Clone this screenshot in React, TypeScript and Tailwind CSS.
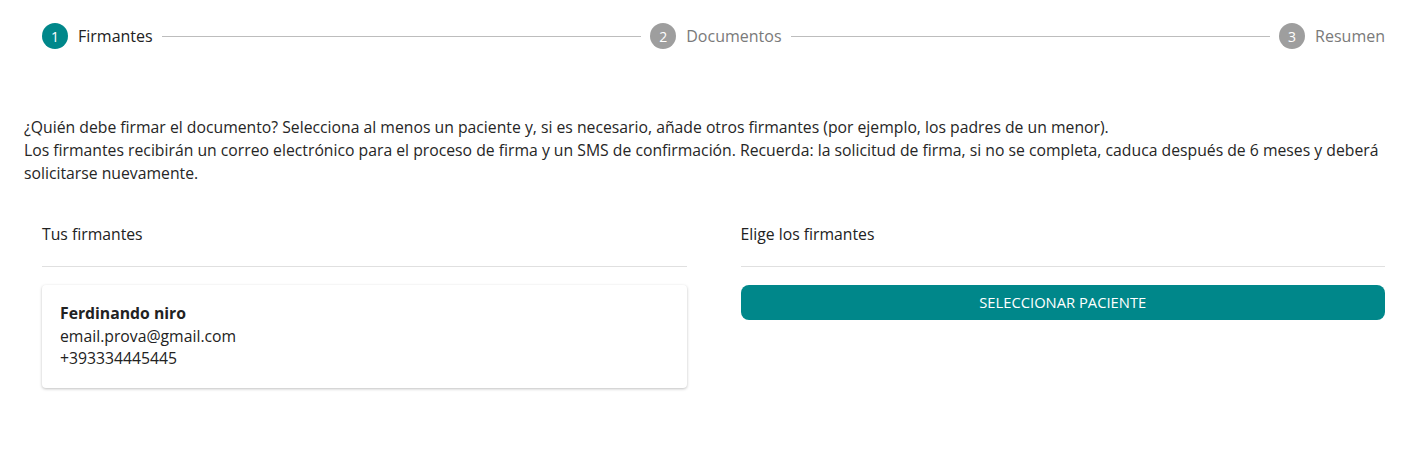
import React from "react";

const steps = [
  { n: 1, label: "Firmantes", active: true },
  { n: 2, label: "Documentos", active: false },
  { n: 3, label: "Resumen", active: false },
];

function Stepper() {
  return (
    <div className="flex items-center pl-[18px] pr-[16px] pt-[23px]">
      {steps.map((s, i) => (
        <React.Fragment key={s.n}>
          <div className="flex items-center">
            <div
              className={
                "flex h-[26px] w-[26px] items-center justify-center rounded-full text-[14px] text-white " +
                (s.active ? "bg-[#00878a]" : "bg-[#9e9e9e]")
              }
            >
              {s.n}
            </div>
            <span
              className={
                "pl-[10px] text-[16px] " +
                (s.active ? "text-[#222]" : "text-[#7a7a7a]")
              }
            >
              {s.label}
            </span>
          </div>
          {i < steps.length - 1 && (
            <div className="mx-[9px] h-px flex-1 bg-[#bdbdbd]" />
          )}
        </React.Fragment>
      ))}
    </div>
  );
}

export default function App() {
  return (
    <div className="min-h-screen bg-white px-6 font-['Open_Sans',sans-serif] text-[#222]">
      <Stepper />
      <div className="pt-[67px] text-[15.75px] leading-[23px] text-[#262626]">
        <p>
          ¿Quién debe firmar el documento? Selecciona al menos un paciente y, si
          es necesario, añade otros firmantes (por ejemplo, los padres de un
          menor).
        </p>
        <p>
          Los firmantes recibirán un correo electrónico para el proceso de firma
          y un SMS de confirmación. Recuerda: la solicitud de firma, si no se
          completa, caduca después de 6 meses y deberá solicitarse nuevamente.
        </p>
      </div>
      <div className="grid grid-cols-2 gap-[54px] pl-[18px] pr-[16px] pt-[38px]">
        <div>
          <div className="border-b border-[#e0e0e0] pb-[20px] text-[15.75px] leading-[23px]">
            Tus firmantes
          </div>
          <div className="mt-[18px] rounded-[4px] bg-white px-[18px] pb-[18px] pt-[17px] text-[15.75px] leading-[22.5px] shadow-[0_1px_3px_rgba(0,0,0,0.25)]">
            <div className="font-bold">Ferdinando niro</div>
            <div>email.prova@gmail.com</div>
            <div>+393334445445</div>
          </div>
        </div>
        <div>
          <div className="border-b border-[#e0e0e0] pb-[20px] text-[15.75px] leading-[23px]">
            Elige los firmantes
          </div>
          <button className="mt-[18px] flex h-[35px] w-full items-center justify-center rounded-[8px] bg-[#00878a] text-[14.75px] text-white">
            SELECCIONAR PACIENTE
          </button>
        </div>
      </div>
    </div>
  );
}
